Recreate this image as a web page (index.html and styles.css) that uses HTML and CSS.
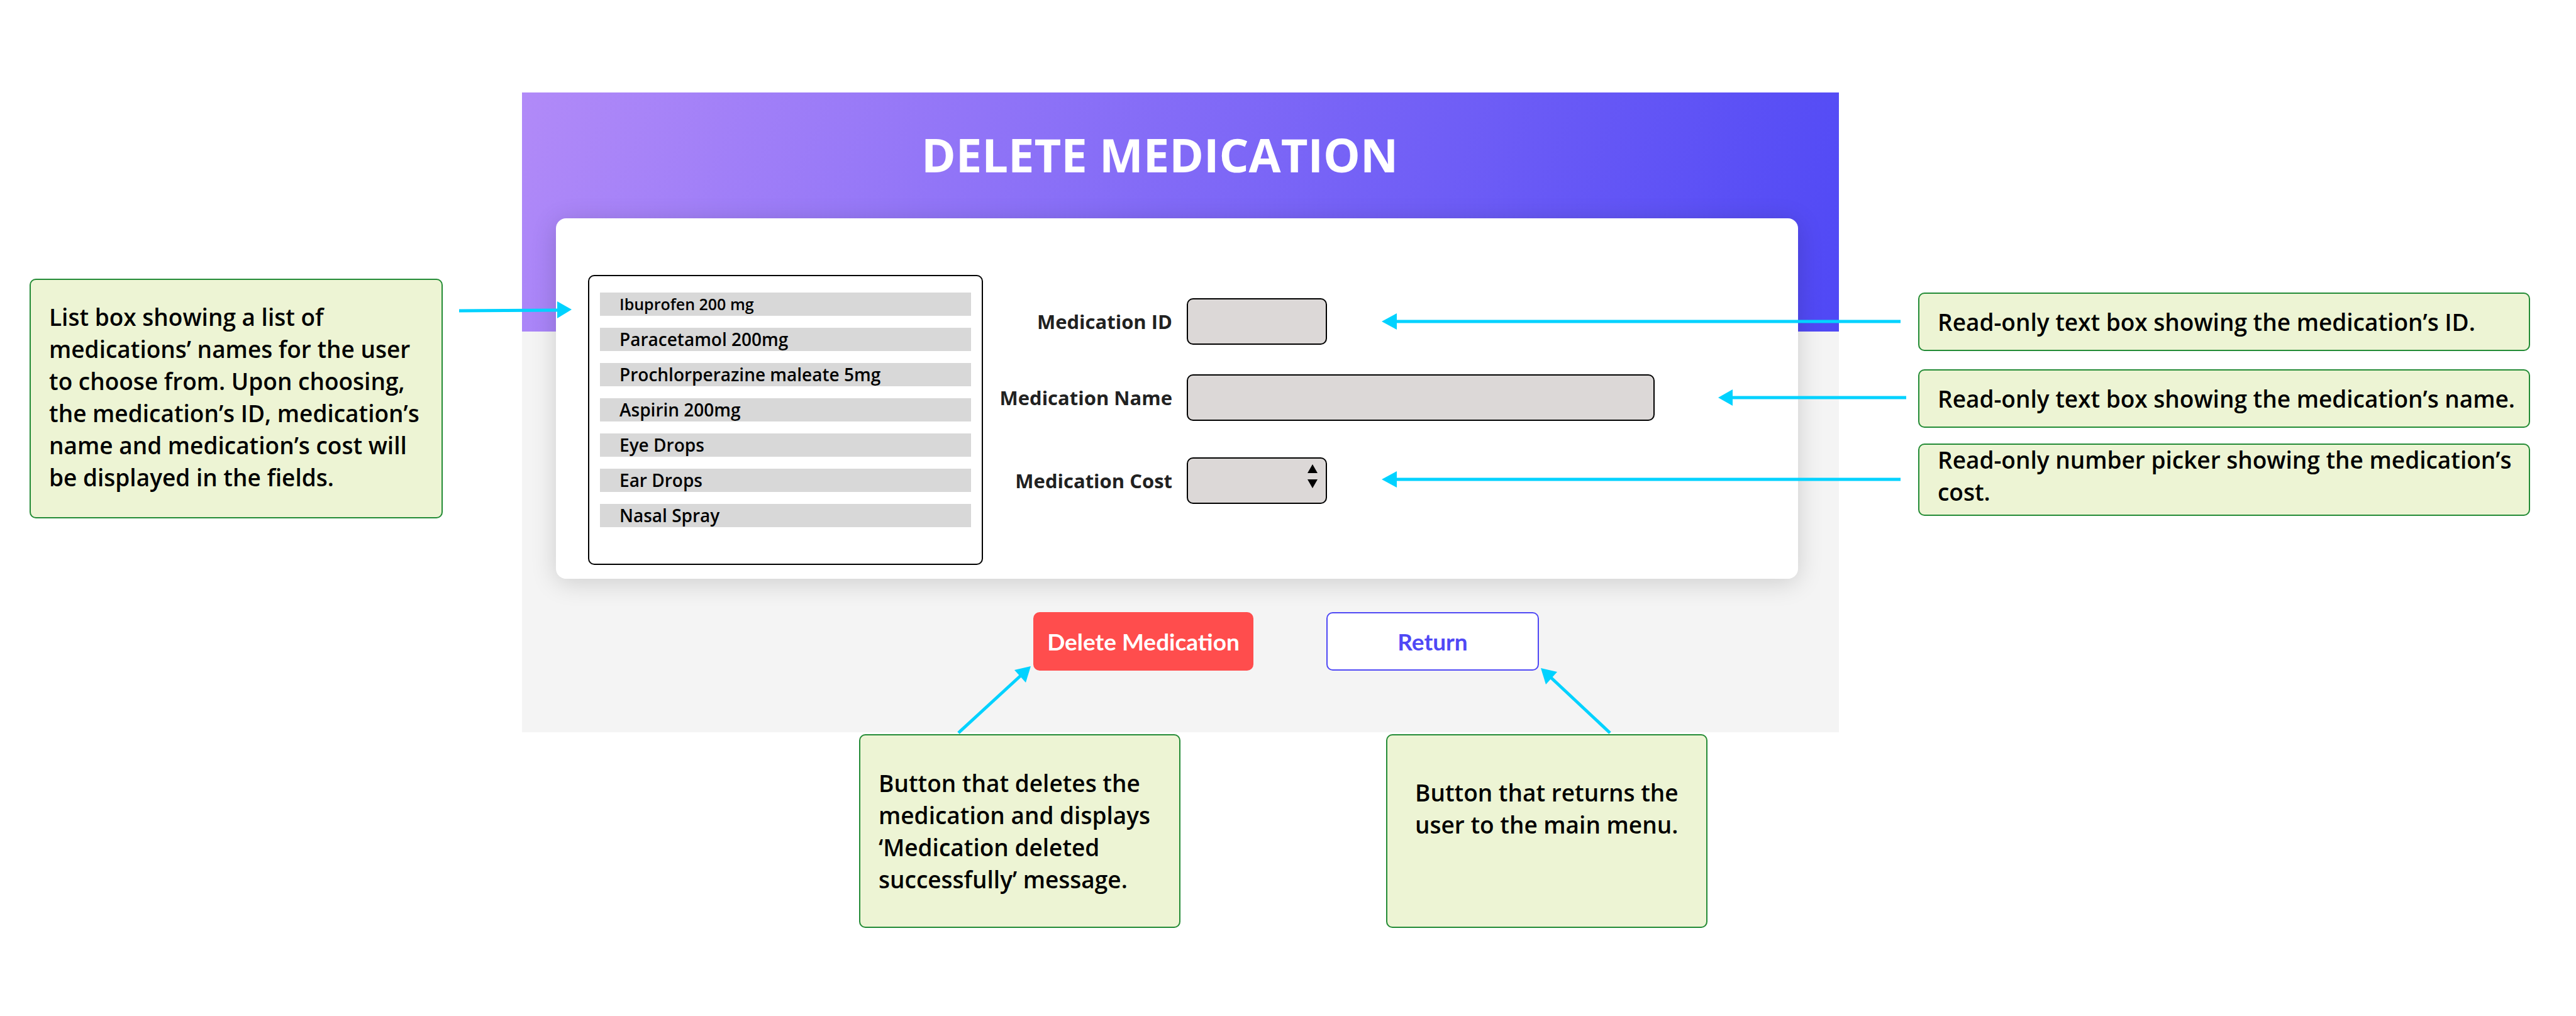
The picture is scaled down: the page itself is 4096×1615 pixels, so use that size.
FILE: index.html
```html
<!DOCTYPE html>
<html lang="en">
<head>
<meta charset="utf-8">
<title>Delete Medication</title>
<link rel="stylesheet" href="styles.css">
</head>
<body>
<main class="board">
  <div class="side side-left">
    <p class="note note-tall">List box showing a list of medications’ names for the user to choose from. Upon choosing, the medication’s ID, medication’s name and medication’s cost will be displayed in the fields.</p>
  </div>

  <div class="center">
    <section class="screen">
      <header class="banner"><h1 class="title">DELETE MEDICATION</h1></header>
      <form class="content">
        <div class="card">
          <ul class="list" aria-label="Medications">
            <li class="item item-small">Ibuprofen 200 mg</li>
            <li class="item">Paracetamol 200mg</li>
            <li class="item">Prochlorperazine maleate 5mg</li>
            <li class="item">Aspirin 200mg</li>
            <li class="item">Eye Drops</li>
            <li class="item">Ear Drops</li>
            <li class="item">Nasal Spray</li>
          </ul>
          <div class="fields">
            <label class="label" for="med-id">Medication ID</label>
            <input class="field" id="med-id" type="text" readonly>
            <label class="label" for="med-name">Medication Name</label>
            <input class="field field-wide" id="med-name" type="text" readonly>
            <label class="label label-cost" for="med-cost">Medication Cost</label>
            <div class="picker">
              <input class="field" id="med-cost" type="number" readonly>
              <svg class="spin" viewBox="0 0 16 38" aria-hidden="true"><path d="M8 0l8 14H0zM8 38l8-14H0z"/></svg>
            </div>
          </div>
        </div>
        <div class="actions">
          <button class="button button-delete" type="button">Delete Medication</button>
          <button class="button button-return" type="button">Return</button>
        </div>
      </form>
    </section>
    <div class="below">
      <p class="note note-below">Button that deletes the medication and displays ‘Medication deleted successfully’ message.</p>
      <p class="note note-below note-return">Button that returns the user to the main menu.</p>
    </div>
  </div>

  <div class="side side-right">
    <p class="note note-line">Read-only text box showing the medication’s ID.</p>
    <p class="note note-line">Read-only text box showing the medication’s name.</p>
    <p class="note note-cost">Read-only number picker showing the medication’s cost.</p>
  </div>

  <svg class="arrows" viewBox="0 0 4096 1615" aria-hidden="true">
    <g class="shafts">
      <path d="M730 494L888 493"/>
      <path d="M3022 511H2219"/>
      <path d="M3031 632H2753"/>
      <path d="M3022 762H2219"/>
      <path d="M1524 1165L1624 1073"/>
      <path d="M2560 1165L2465 1076"/>
    </g>
    <path d="M909 492L886 479V506z"/>
    <path d="M2197 511L2221 498V524z"/>
    <path d="M2732 632L2755 619V645z"/>
    <path d="M2197 762L2221 749V775z"/>
    <path d="M1639 1059L1613 1065L1631 1085z"/>
    <path d="M2450 1062L2476 1068L2458 1088z"/>
  </svg>
</main>
</body>
</html>
```
FILE: styles.css
```css
* {
  box-sizing: border-box;
}

body {
  margin: 0;
  background: #fff;
  color: #000;
  font-family: "Open Sans", "Noto Sans", sans-serif;
}

.board {
  position: relative;
  display: grid;
  grid-template-columns: 657fr 2094fr 973fr;
  column-gap: 126px;
  align-items: start;
  padding: 147px 73px 139px 47px;
}

/* Annotation notes */
.note {
  margin: 0;
  padding: 0 14px 0 31px;
  border-radius: 10px;
  background: #edf4d4;
  box-shadow: inset 0 0 0 2px #238b36;
  font-size: 37px;
  font-weight: 600;
  line-height: 51px;
}

.side {
  display: flex;
  flex-direction: column;
}

.side-left {
  padding-top: 296px;
}

.side-right {
  padding-top: 318px;
}

.note-tall {
  padding-top: 35px;
  padding-bottom: 40px;
}

.note-line {
  margin-bottom: 29px;
  padding-top: 21px;
  padding-bottom: 21px;
}

.note-cost {
  margin-top: -4px;
  padding-bottom: 13px;
}

.below {
  display: grid;
  grid-template-columns: 1fr 1fr;
  column-gap: 327px;
  padding: 3px 209px 0 536px;
}

.note-below {
  min-height: 308px;
  padding-top: 52px;
}

.note-return {
  padding-top: 67px;
  padding-left: 46px;
}

/* Screen */
.screen {
  display: flex;
  flex-direction: column;
  background: #f4f4f4;
}

.banner {
  height: 380px;
  padding: 47px 66px 0 0;
  background: linear-gradient(112deg, #b18af8, #4f48f5);
}

.title {
  margin: 0;
  color: #fff;
  font-size: 74px;
  font-weight: 700;
  line-height: 104px;
  text-align: center;
}

.content {
  margin-top: -180px;
  padding: 0 65px 98px 54px;
}

.card {
  display: flex;
  align-items: flex-start;
  gap: 30px;
  padding: 90px 64px 22px 51px;
  border-radius: 16px;
  background: #fff;
  box-shadow: 0 6px 40px rgba(0, 0, 0, .16);
}

.list {
  display: flex;
  flex: none;
  flex-direction: column;
  gap: 19px;
  width: 628px;
  margin: 0;
  padding: 26px 17px 58px;
  border: 2px solid #000;
  border-radius: 10px;
  list-style: none;
}

.item {
  height: 37px;
  padding-left: 31px;
  background: #d8d8d8;
  font-size: 28px;
  font-weight: 600;
  line-height: 37px;
}

.item-small {
  font-size: 25px;
}

.fields {
  display: grid;
  grid-template-columns: 271px auto;
  column-gap: 23px;
  justify-items: start;
  align-items: center;
  padding-top: 37px;
}

.label {
  height: 121px;
  color: #212121;
  font-size: 31px;
  font-weight: 700;
  line-height: 74px;
  white-space: nowrap;
  justify-self: end;
}

.field {
  align-self: start;
  width: 223px;
  height: 74px;
  margin: 0;
  padding: 0 16px;
  border: 2px solid #000;
  border-radius: 10px;
  background: #dcd8d7;
  font: inherit;
  font-size: 31px;
}

.field-wide {
  width: 744px;
}

.label-cost {
  height: 74px;
  margin-top: 11px;
}

.picker {
  position: relative;
  display: flex;
  margin-top: 11px;
}

.picker .field {
  appearance: textfield;
}

.spin {
  position: absolute;
  top: 11px;
  right: 15px;
  width: 16px;
  height: 38px;
}

.actions {
  display: flex;
  gap: 116px;
  padding: 53px 0 0 759px;
}

.button {
  height: 93px;
  padding: 0;
  border: 2px solid #4f48f5;
  border-radius: 10px;
  font-family: Lato, Carlito, sans-serif;
  font-size: 37px;
  font-weight: 700;
  line-height: 44px;
  white-space: nowrap;
}

.button-delete {
  width: 350px;
  border-color: #ff4d4d;
  background: #ff4d4d;
  color: #fff;
}

.button-return {
  width: 338px;
  background: #fff;
  color: #4f48f5;
}

/* Arrows between the notes and the screen */
.arrows {
  position: absolute;
  top: 0;
  left: 0;
  width: 100%;
  fill: #00d2ff;
}

.shafts {
  fill: none;
  stroke: #00d2ff;
  stroke-width: 5px;
}
```
